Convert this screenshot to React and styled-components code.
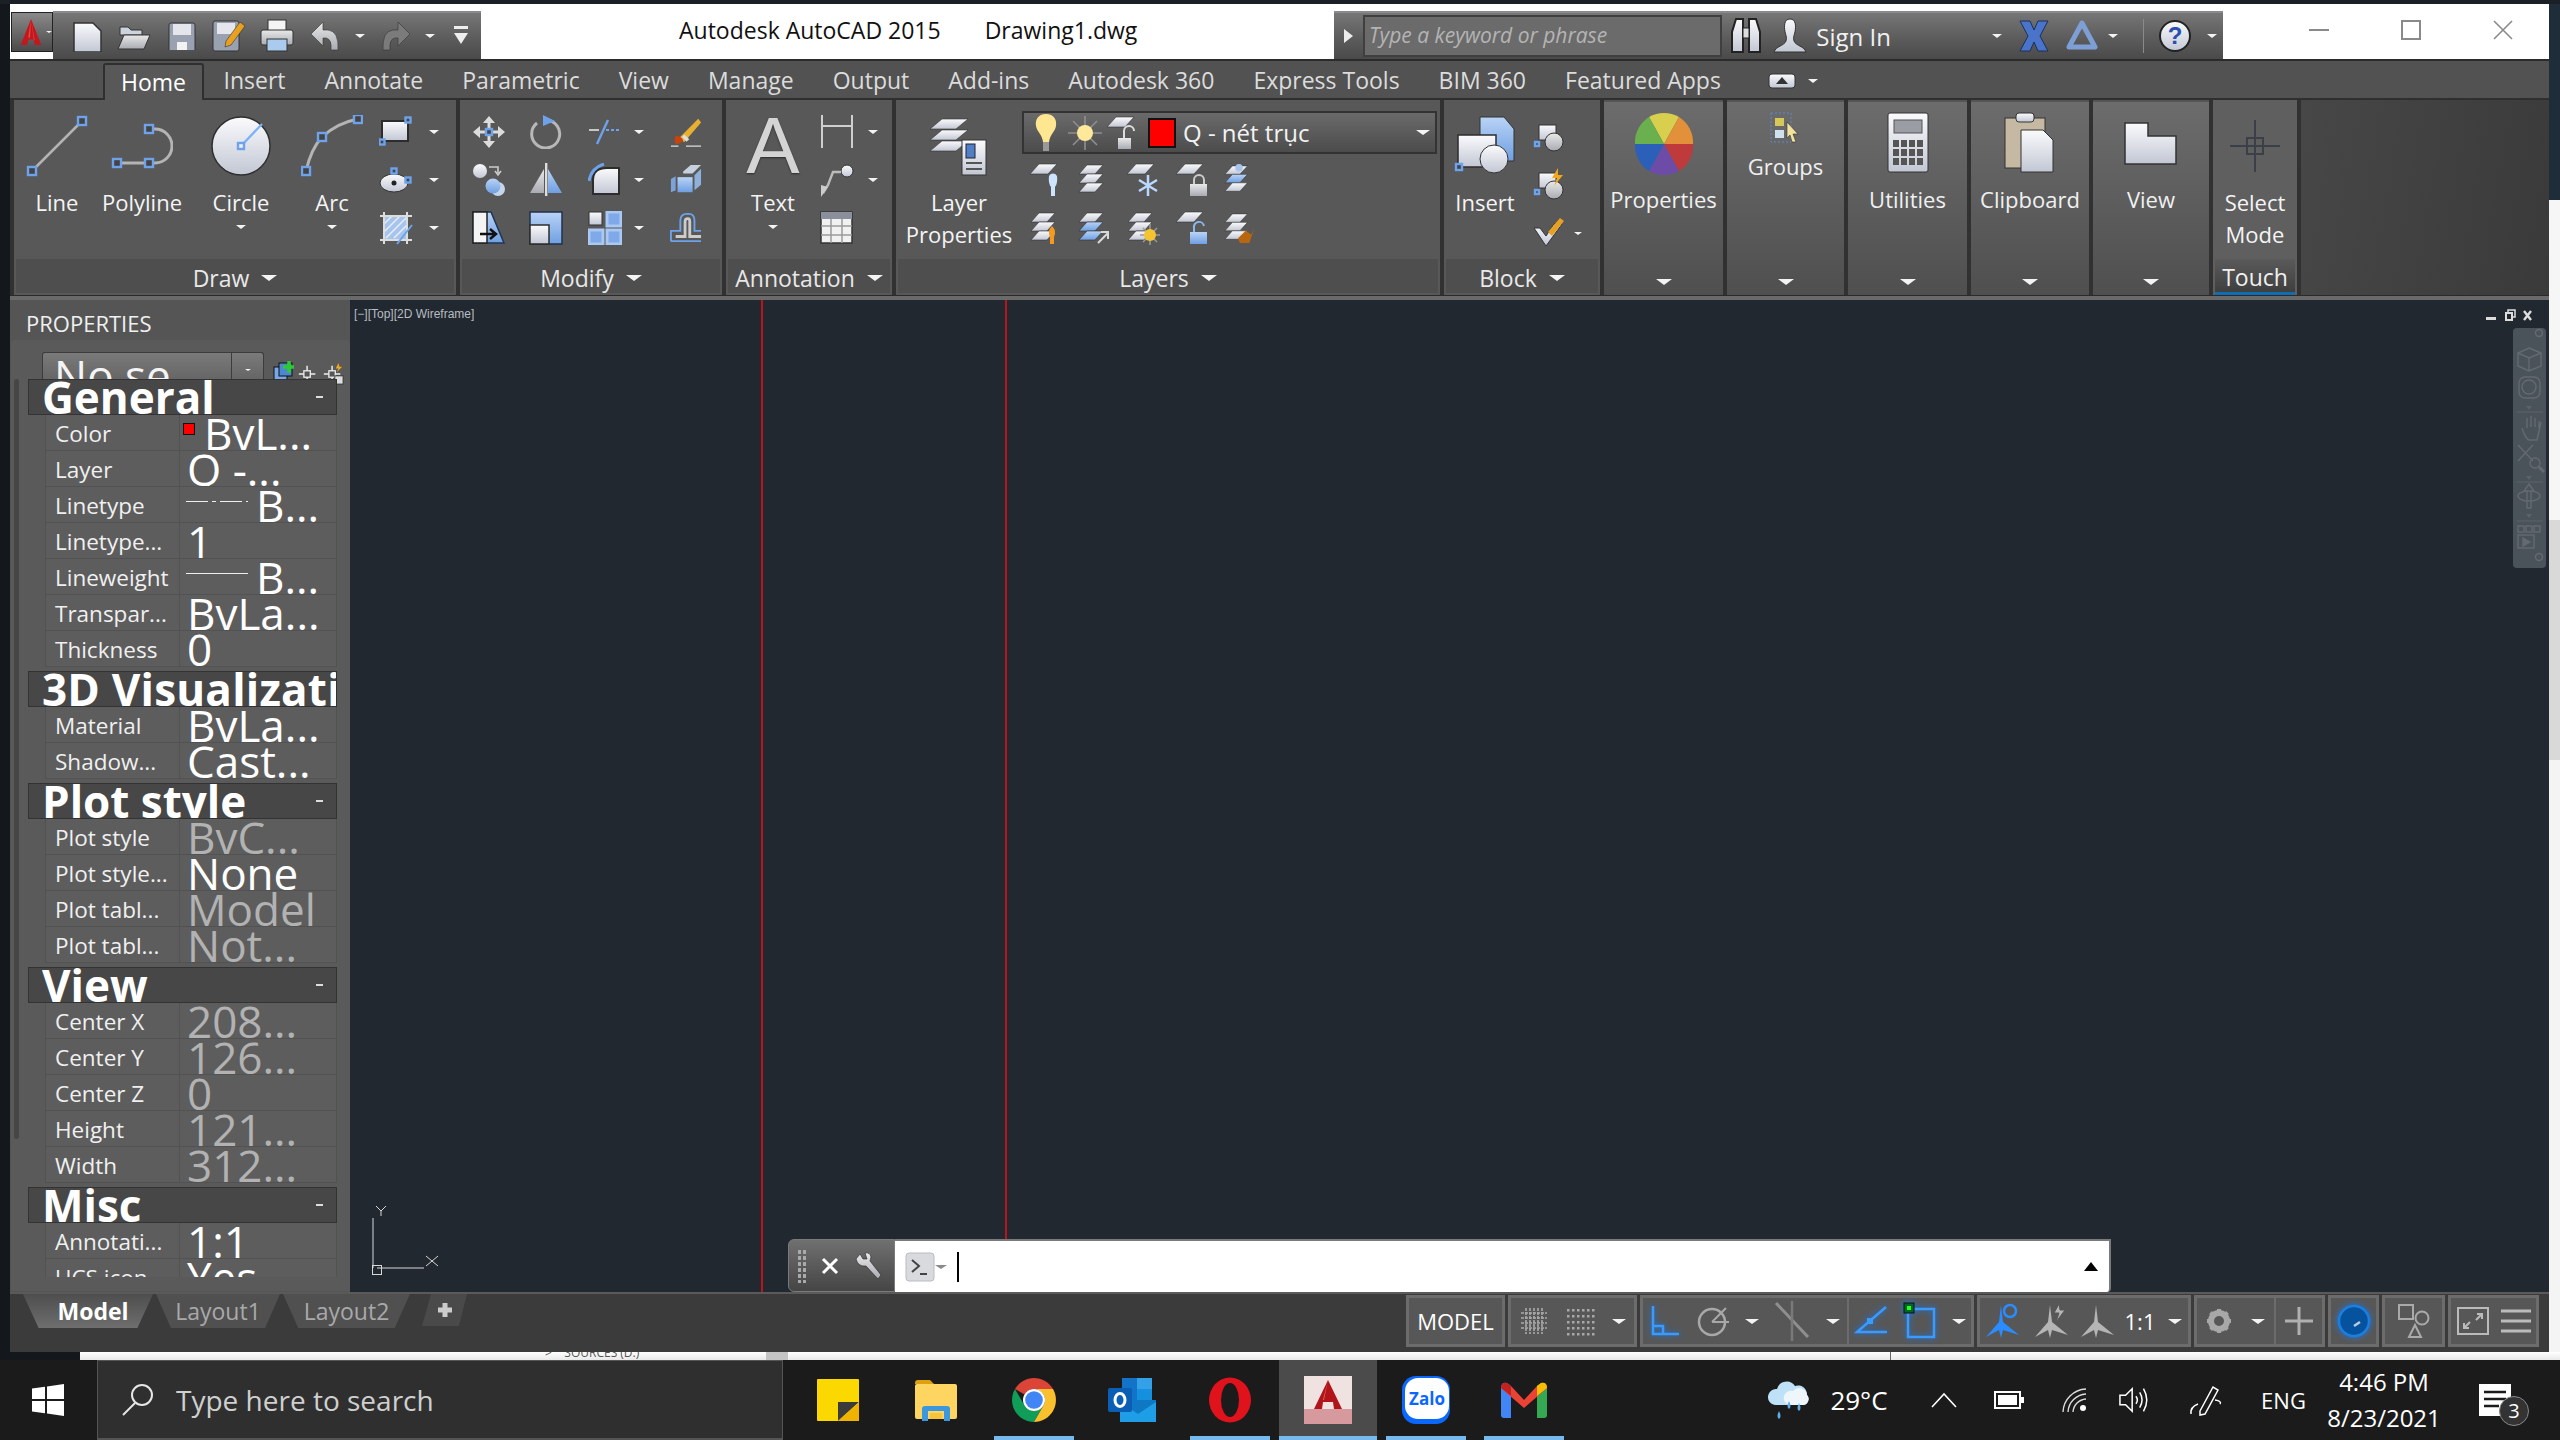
import React from 'react';
import styled, { createGlobalStyle } from 'styled-components';

const GlobalStyle = createGlobalStyle`
  html, body { margin: 0; padding: 0; background: #14181c; }
  * { box-sizing: border-box; }
  body { font-family: "Open Sans", "Noto Sans", "Liberation Sans", sans-serif; }
`;

//====== Page frame ======//
const Screen = styled.div`
  width: 2560px;
  height: 1440px;
  overflow: hidden;
  display: flex;
  flex-direction: column;
  background: #14181c;
`;
const TopStrip = styled.div`
  height: 4px;
  background: #1b2026;
`;
const Middle = styled.div`
  height: 1348px;
  display: flex;
  padding-left: 10px;
`;
const AppWindow = styled.div`
  width: 2539px;
  display: flex;
  flex-direction: column;
`;
const RightEdge = styled.div`
  flex: 1;
  display: flex;
  flex-direction: column;
`;
const EdgePart = styled.div`
  height: ${p => p.$h}px;
  background: ${p => p.$c};
`;
const DesktopStrip = styled.div`
  height: 8px;
  margin-left: 80px;
  background: linear-gradient(#ffffff, #e9e9e9);
  overflow: hidden;
  display: flex;
  align-items: flex-start;
`;
const StripText = styled.span`
  margin-left: 465px;
  margin-top: -6px;
  font-size: 12px;
  line-height: 14px;
  color: #555;
  width: 221px;
  flex: none;
`;
const StripBlock = styled.span`
  width: 22px;
  height: 8px;
  background: #c4c4c4;
  flex: none;
`;
const StripLine = styled.span`
  width: 1px;
  height: 8px;
  margin-left: 1102px;
  background: #666;
  flex: none;
`;

//====== Title bar ======//
const TitleBar = styled.header`
  height: 55px;
  display: flex;
  background: #fff;
`;
const AppButton = styled.div`
  width: 42px;
  height: 40px;
  margin-top: 8px;
  margin-left: 1px;
  background: linear-gradient(#8a8a8a, #4a4a4a);
  border: 1px solid #222;
  display: flex;
  align-items: center;
  padding-left: 5px;
  gap: 1px;
`;
const Qat = styled.div`
  width: 428px;
  margin-top: 7px;
  display: flex;
  align-items: center;
  padding-left: 10px;
  background: linear-gradient(#767676, #5c5c5c 55%, #4a4a4a);
  border-top: 2px solid #8a8a8a;
`;
const QatCell = styled.span`
  width: ${p => p.$w || 48}px;
  display: flex;
  justify-content: center;
  align-items: center;
`;
const TitleArea = styled.div`
  width: 853px;
  display: flex;
  align-items: center;
  padding-left: 198px;
  gap: 44px;
  padding-bottom: 4px;
  font-size: 23px;
  color: #111;
`;
const SearchBar = styled.div`
  width: 889px;
  margin-top: 7px;
  display: flex;
  align-items: center;
  background: linear-gradient(#767676, #5c5c5c 55%, #4a4a4a);
  border-top: 2px solid #8a8a8a;
  color: #fff;
`;
const SearchArrow = styled.i`
  width: 0;
  height: 0;
  margin-left: 10px;
  margin-right: 10px;
  border-top: 7px solid transparent;
  border-bottom: 7px solid transparent;
  border-left: 9px solid #eee;
`;
const SearchInput = styled.div`
  width: 359px;
  height: 42px;
  background: #6b6b6b;
  border: 2px solid #3f3f3f;
  padding-left: 4px;
  font-size: 21px;
  line-height: 36px;
  font-style: italic;
  color: #b4b4b4;
`;
const BarCell = styled.span`
  width: ${p => p.$w}px;
  display: flex;
  justify-content: ${p => p.$start ? 'flex-start' : 'center'};
  align-items: center;
  font-size: 24px;
  color: #f0f0f0;
`;
const BarSep = styled.span`
  width: 1px;
  height: 34px;
  background: #8a8a8a;
`;
const WinControls = styled.div`
  flex: 1;
  display: flex;
  padding-left: 50px;
  padding-top: 4px;
`;
const WinButton = styled.span`
  width: 92px;
  display: flex;
  align-items: center;
  justify-content: center;
  padding-bottom: 8px;
`;

//====== Ribbon tabs ======//
const TabRow = styled.nav`
  height: 41px;
  display: flex;
  align-items: flex-end;
  padding-left: 93px;
  background: #525252;
  border-top: 2px solid #2b2b2b;
  border-bottom: 2px solid #2f2f2f;
`;
const RibbonTab = styled.span`
  height: 35px;
  padding: 0 ${p => p.$pad || 19.5}px;
  line-height: 35px;
  font-size: 23px;
  white-space: nowrap;
  color: ${p => p.$active ? '#fff' : '#dcdcdc'};
  ${p => p.$active ? `
    background: #585858;
    border: 2px solid #2f2f2f;
    border-bottom: 0;
    border-radius: 3px 3px 0 0;
    margin-bottom: -2px;
    height: 37px;
  ` : ''}
`;
const TabExtras = styled.span`
  margin-left: 28px;
  height: 35px;
  display: flex;
  align-items: center;
  gap: 12px;
`;

//====== Ribbon panels ======//
const Ribbon = styled.div`
  height: 195px;
  display: flex;
  gap: 4px;
  padding-left: 4px;
  background: #313131;
`;
const RibbonRest = styled.div`
  flex: 1;
  background: linear-gradient(100deg, #474747, #3a3a3a);
`;
const RibbonFoot = styled.div`
  height: 5px;
  background: #6a6a6a;
  border-top: 1px solid #2a2a2a;
`;
const Panel = styled.section`
  width: ${p => p.$w}px;
  display: flex;
  flex-direction: column;
  background: #585858;
`;
const PanelBody = styled.div`
  height: 159px;
  display: flex;
`;
const PanelTitle = styled.div`
  height: 34px;
  margin: 0 2px;
  padding-top: 4px;
  background: #4e4e4e;
  display: flex;
  align-items: center;
  justify-content: center;
  gap: 12px;
  font-size: 23px;
  color: #e8e8e8;
`;
const FoldedPanel = styled.section`
  width: ${p => p.$w}px;
  display: flex;
  flex-direction: column;
  align-items: center;
  background: linear-gradient(#6c6c6c, #4f4f4f);
  color: #f0f0f0;
  font-size: 22px;
  border-top: 2px solid #555;
`;
const FoldedIcon = styled.div`
  height: ${p => p.$h || 79}px;
  padding-top: ${p => p.$top || 10}px;
  display: flex;
  justify-content: center;
`;
const FoldedLabel = styled.div`
  flex: 1;
  line-height: 32px;
  padding-top: 2px;
  display: flex;
  flex-direction: column;
  align-items: center;
  width: 100%;
`;
const FoldedArrow = styled.div`
  margin-top: auto;
  margin-bottom: 10px;
`;
const TouchPanel = styled.section`
  width: 84px;
  display: flex;
  flex-direction: column;
  align-items: center;
  background: #5f5f5f;
  color: #f0f0f0;
  font-size: 22px;
`;
const TouchTitle = styled.div`
  width: 80px;
  height: 36px;
  text-align: center;
  line-height: 36px;
  font-size: 23px;
  background: linear-gradient(#5a5a5a, #3f3f3f);
  border-bottom: 3px solid #0f6cb0;
`;
const BigTool = styled.div`
  width: ${p => p.$w}px;
  flex: ${p => p.$fill ? 1 : 'none'};
  display: flex;
  flex-direction: column;
  align-items: center;
  padding-top: 15px;
  color: #f4f4f4;
  font-size: 22px;
`;
const BigIcon = styled.div`
  height: 62px;
  margin-bottom: 9px;
  display: flex;
  align-items: center;
  justify-content: center;
`;
const LetterIcon = styled.span`
  font-family: "Liberation Sans", sans-serif;
  font-size: 80px;
  line-height: 62px;
  color: #d4d4d4;
  text-shadow: 0 1px 2px #2c2c2c;
`;
const ToolLabel = styled.div`
  line-height: 32px;
  text-align: center;
  white-space: nowrap;
`;
const ToolArrow = styled.div`
  margin-top: 5px;
  height: 8px;
  display: flex;
  align-items: center;
`;
const ToolColumn = styled.div`
  display: flex;
  flex-direction: column;
  padding-top: ${p => p.$top || 8}px;
  padding-left: ${p => p.$left || 0}px;
`;
const ToolRow = styled.div`
  height: 48px;
  display: flex;
  align-items: center;
  padding-left: ${p => p.$left || 0}px;
`;
const SmallTool = styled.span`
  width: ${p => p.$w || 32}px;
  flex: none;
  display: flex;
  align-items: center;
  gap: ${p => p.$gap || 12}px;
`;
const Arrow = styled.i`
  display: block;
  flex: none;
  width: 0;
  height: 0;
  border-left: ${p => p.$s || 5}px solid transparent;
  border-right: ${p => p.$s || 5}px solid transparent;
  border-top: ${p => Math.round((p.$s || 5) * 0.7)}px solid ${p => p.$c || '#f4f4f4'};
`;
const LayerCombo = styled.div`
  width: 415px;
  height: 43px;
  margin-top: 11px;
  display: flex;
  align-items: center;
  background: linear-gradient(#6a6a6a, #4c4c4c);
  border: 2px solid #333;
  color: #f2f2f2;
  font-size: 24px;
`;
const ComboCell = styled.span`
  width: ${p => p.$w}px;
  flex: none;
  display: flex;
  justify-content: center;
`;
const ColorChip = styled.span`
  width: 28px;
  height: 30px;
  margin-right: 7px;
  background: #ff0000;
  border: 2px solid #111;
  flex: none;
`;
const ComboArrow = styled.span`
  margin-left: auto;
  margin-right: 5px;
`;

//====== Workspace ======//
const Workspace = styled.main`
  height: 992px;
  display: flex;
`;
const Palette = styled.aside`
  width: 340px;
  background: #555;
  display: flex;
  flex-direction: column;
`;
const PaletteHead = styled.div`
  height: 40px;
  padding-left: 16px;
  line-height: 46px;
  font-size: 22px;
  color: #f0f0f0;
`;
const PaletteInner = styled.div`
  height: 951px;
  padding-top: 12px;
  background: #5a5a5a;
  border-radius: 4px 4px 0 0;
  margin-left: 1px;
  overflow: hidden;
`;
const PaletteTools = styled.div`
  height: 27px;
  display: flex;
  align-items: flex-start;
  padding-left: 31px;
  gap: 3px;
`;
const SelectBox = styled.div`
  width: 222px;
  height: 27px;
  margin-right: 5px;
  display: flex;
  overflow: hidden;
  background: linear-gradient(#7a7a7a, #666);
  border: 1px solid #3c3c3c;
  border-bottom: 0;
  border-radius: 3px 3px 0 0;
  color: #f4f4f4;
  font-size: 44px;
  line-height: 44px;
  padding-left: 11px;
`;
const SelectText = styled.span`
  flex: 1;
  white-space: nowrap;
`;
const SelectButton = styled.span`
  width: 32px;
  border-left: 1px solid #3c3c3c;
  display: flex;
  justify-content: center;
  padding-top: 16px;
`;
const PaletteTool = styled.span`
  width: 22px;
  display: flex;
  justify-content: center;
  padding-top: 9px;
`;
const PaletteBody = styled.div`
  display: flex;
  padding-left: 3px;
`;
const ScrollThumb = styled.div`
  width: 5px;
  height: 760px;
  margin-right: 9px;
  background: #464646;
  border-radius: 3px;
  flex: none;
`;
const PropList = styled.div`
  width: 309px;
  height: 898px;
  overflow: hidden;
`;
const PropGroup = styled.div`
  margin-bottom: 4px;
`;
const GroupHead = styled.div`
  height: 36px;
  display: flex;
  align-items: center;
  overflow: hidden;
  padding-left: 13px;
  padding-right: ${p => p.$open ? 5 : 0}px;
  background: #474747;
  border: 1px solid #333;
  color: #fff;
  font-size: 44px;
  font-weight: 700;
  line-height: 36px;
  white-space: nowrap;
`;
const GroupName = styled.span`
  flex: 1;
  min-width: 0;
  overflow: hidden;
  height: 36px;
  letter-spacing: ${p => p.$long ? '0.2px' : 0};
`;
const GroupDash = styled.span`
  width: 7px;
  height: 2px;
  margin-left: 4px;
  margin-right: 8px;
  background: #ddd;
  flex: none;
`;
const PropRow = styled.div`
  height: 36px;
  margin-left: 17px;
  display: grid;
  grid-template-columns: 133px 1fr;
  overflow: hidden;
  background: #5d5d5d;
  border-left: 1px solid #525252;
  border-right: 1px solid #525252;
  border-bottom: 1px solid #525252;
`;
const PropLabel = styled.div`
  padding-left: 9px;
  font-size: 22.5px;
  line-height: 37px;
  color: #f0f0f0;
  white-space: nowrap;
  overflow: hidden;
`;
const PropValue = styled.div`
  display: flex;
  align-items: center;
  overflow: hidden;
  padding-left: ${p => p.$left}px;
  border-left: 1px solid #525252;
  font-size: 44px;
  line-height: 36px;
  height: 35px;
  white-space: nowrap;
  color: ${p => p.$dim ? '#b2b2b2' : '#fff'};
`;
const Swatch = styled.span`
  width: 10px;
  height: 10px;
  margin-right: 10px;
  margin-top: -8px;
  background: #f00;
  outline: 1px solid #111;
  flex: none;
`;
const LineSample = styled.span`
  width: 62px;
  height: 1px;
  margin-right: 8px;
  margin-top: -6px;
  flex: none;
  background: ${p => p.$dash
    ? 'repeating-linear-gradient(90deg, #eee 0 22px, transparent 22px 26px, #eee 26px 30px, transparent 30px 34px)'
    : '#eee'};
`;

//====== Drawing canvas and what floats over it ======//
const Canvas = styled.section`
  flex: 1;
  position: relative;
  background: #212830;
  overflow: hidden;
`;
const RedLine = styled.i`
  position: absolute;
  top: 0;
  bottom: 0;
  left: ${p => p.$x}px;
  width: 2px;
  background: #b8161f;
`;
const ViewLabel = styled.span`
  position: absolute;
  left: 4px;
  top: 6px;
  font-family: "Liberation Sans", sans-serif;
  font-size: 12px;
  line-height: 16px;
  color: #b8bcc0;
`;
const ViewControls = styled.div`
  position: absolute;
  right: 17px;
  top: 7px;
`;
const NavBar = styled.div`
  position: absolute;
  right: 3px;
  top: 28px;
  width: 33px;
  height: 240px;
  border-radius: 4px;
  background: #4b535a;
`;
const UcsIcon = styled.div`
  position: absolute;
  left: 22px;
  top: 903px;
`;
const CommandLine = styled.div`
  position: absolute;
  left: 438px;
  top: 939px;
  width: 1323px;
  height: 53px;
  display: flex;
`;
const CommandHandle = styled.div`
  width: 107px;
  display: flex;
  align-items: center;
  padding-left: 8px;
  gap: 14px;
  background: linear-gradient(#707070, #454545);
  border-radius: 6px 0 0 6px;
  border: 1px solid #7a7a7a;
`;
const GripDots = styled.span`
  width: 10px;
  height: 34px;
  background-image: radial-gradient(#aaa 45%, transparent 50%);
  background-size: 5px 6px;
`;
const CommandInput = styled.div`
  flex: 1;
  display: flex;
  align-items: center;
  padding-left: 10px;
  background: #fff;
  border-top: 2px solid #7a7a7a;
  border-right: 2px solid #7a7a7a;
  border-radius: 0 0 4px 0;
`;
const Caret = styled.i`
  width: 2px;
  height: 30px;
  margin-left: 10px;
  background: #000;
`;
const CommandEnd = styled.span`
  margin-left: auto;
  margin-right: 11px;
`;
const ArrowUp = styled.i`
  display: block;
  width: 0;
  height: 0;
  border-left: 7px solid transparent;
  border-right: 7px solid transparent;
  border-bottom: 9px solid #000;
`;

//====== Status bar ======//
const StatusBar = styled.footer`
  height: 60px;
  display: flex;
  align-items: flex-start;
  background: #3b3b3b;
  border-top: 2px solid #5a5a5a;
  padding-right: 10px;
`;
const LayoutTabs = styled.div`
  margin-left: 13px;
  margin-top: 0;
  display: flex;
  gap: 3px;
`;
const LayoutTab = styled.span`
  width: ${p => p.$w}px;
  height: 34px;
  padding-left: ${p => p.$active ? 10 : 0}px;
  text-align: center;
  line-height: 34px;
  font-size: 23px;
  font-weight: ${p => p.$active ? 700 : 400};
  color: ${p => p.$active ? '#fff' : '#a9a9a9'};
  background: ${p => p.$active ? 'linear-gradient(#4e4e4e, #6e6e6e)' : '#505050'};
  clip-path: polygon(0 0, 100% 0, 88% 100%, 12% 100%);
`;
const AddTab = styled.span`
  width: 45px;
  height: 32px;
  margin-left: 9px;
  display: flex;
  align-items: center;
  justify-content: center;
  background: #4a4a4a;
  clip-path: polygon(20% 0, 100% 0, 82% 100%, 0 100%);
`;
const StatusGroups = styled.div`
  margin-left: auto;
  margin-top: 1px;
  display: flex;
  gap: 3px;
`;
const StatusGroup = styled.div`
  width: ${p => p.$w}px;
  height: 52px;
  display: flex;
  align-items: center;
  background: #575757;
  border: 3px solid #6c6c6c;
  color: #fff;
  font-size: 22px;
`;
const StatusCell = styled.span`
  width: ${p => p.$w}px;
  height: 100%;
  flex: none;
  display: flex;
  align-items: center;
  justify-content: center;
  ${p => p.$rule ? 'border-left: 2px solid #6c6c6c;' : ''}
`;

//====== Taskbar ======//
const Taskbar = styled.div`
  height: 80px;
  display: flex;
  background: #1b1b1b;
  color: #fff;
`;
const StartButton = styled.div`
  width: 97px;
  display: flex;
  align-items: center;
  justify-content: center;
  padding-right: 2px;
`;
const SearchBox = styled.div`
  width: 686px;
  display: flex;
  align-items: center;
  gap: 21px;
  padding-left: 23px;
  background: #2f2f2f;
  border: 1px solid #555;
  border-bottom: 2px solid #555;
  color: #cfcfcf;
  font-size: 28px;
`;
const AppIcons = styled.div`
  display: flex;
  margin-left: 6px;
`;
const AppSlot = styled.div`
  width: 98px;
  position: relative;
  display: flex;
  align-items: center;
  justify-content: center;
  background: ${p => p.$active ? '#4b4b4b' : 'transparent'};
  ${p => p.$running ? `
    &::after {
      content: '';
      position: absolute;
      left: ${p.$active ? 0 : 9}px;
      right: ${p.$active ? 0 : 9}px;
      bottom: 0;
      height: 4px;
      background: #76b9ed;
    }
  ` : ''}
`;
const Tray = styled.div`
  margin-left: auto;
  padding-right: 32px;
  display: flex;
  align-items: center;
`;
const TrayItem = styled.span`
  width: ${p => p.$w}px;
  display: flex;
  justify-content: center;
  align-items: center;
  font-size: ${p => p.$size || 24}px;
  white-space: nowrap;
`;
const Clock = styled.span`
  width: 156px;
  text-align: center;
  font-size: 24px;
  line-height: 36px;
`;
const NoteWrap = styled.span`
  width: 66px;
  display: flex;
  justify-content: center;
  position: relative;
`;
const NoteBadge = styled.span`
  position: absolute;
  left: 37px;
  top: 12px;
  width: 30px;
  height: 30px;
  border-radius: 50%;
  background: #333;
  border: 1px solid #888;
  font-size: 20px;
  line-height: 28px;
  text-align: center;
  color: #fff;
`;

const HiddenDefs = styled.svg`
  display: block;
  width: 0;
  height: 0;
`;
const Glow = styled.svg`
  filter: drop-shadow(0 0 3px #1877e6);
`;

//====== Icons ======//
const Defs = () => (
  <HiddenDefs>
    <defs>
      <linearGradient id="lite" x1="0" y1="0" x2="0" y2="1">
        <stop offset="0" stopColor="#fbfbfd" />
        <stop offset="1" stopColor="#c2c7d4" />
      </linearGradient>
      <linearGradient id="blue" x1="0" y1="0" x2="0" y2="1">
        <stop offset="0" stopColor="#b9d3f6" />
        <stop offset="1" stopColor="#6f9fe2" />
      </linearGradient>
      <linearGradient id="metal" x1="0" y1="0" x2="0" y2="1">
        <stop offset="0" stopColor="#e9e9e9" />
        <stop offset="1" stopColor="#a9abb2" />
      </linearGradient>
    </defs>
  </HiddenDefs>
);

const Ico = ({ w = 34, h = w, vb, children }) => (
  <svg width={w} height={h} viewBox={vb || `0 0 ${w} ${h}`}>{children}</svg>
);
const Grip = ({ x, y, s = 8, fill = '#444' }) => (
  <rect x={x - s / 2} y={y - s / 2} width={s} height={s} fill={fill} stroke="#6ea2ea" strokeWidth="2.4" />
);

const LineIcon = () => (
  <Ico w={62}>
    <path d="M6 56L56 6" stroke="#b4b4b4" strokeWidth="2.5" />
    <Grip x={6} y={56} /><Grip x={56} y={6} />
  </Ico>
);
const PolylineIcon = () => (
  <Ico w={62}>
    <path d="M6 48H44A17 17 0 0 0 44 14H38" fill="none" stroke="#b4b4b4" strokeWidth="3" />
    <Grip x={6} y={48} /><Grip x={38} y={48} /><Grip x={38} y={14} />
  </Ico>
);
const CircleIcon = () => (
  <Ico w={62}>
    <circle cx="31" cy="31" r="29" fill="url(#lite)" stroke="#2f2f2f" strokeWidth="1.5" />
    <path d="M31 31L52 9" stroke="#7fb2f7" strokeWidth="2.4" />
    <Grip x={31} y={31} s={6} fill="#eef" />
  </Ico>
);
const ArcIcon = () => (
  <Ico w={62}>
    <path d="M5 56Q10 34 21 22Q36 8 57 4" fill="none" stroke="#b4b4b4" strokeWidth="3" />
    <Grip x={5} y={56} /><Grip x={21} y={22} /><Grip x={57} y={4} />
  </Ico>
);
const RectIcon = () => (
  <Ico>
    <rect x="3" y="6" width="26" height="20" fill="url(#lite)" stroke="#2c2c2c" strokeWidth="2" />
    <Grip x={29} y={5} s={5} /><Grip x={3} y={27} s={5} />
  </Ico>
);
const EllipseIcon = () => (
  <Ico>
    <ellipse cx="15" cy="20" rx="14" ry="9" fill="url(#lite)" stroke="#333" />
    <circle cx="15" cy="20" r="2.5" fill="#222" />
    <Grip x={15} y={8} s={5} /><Grip x={29} y={17} s={5} />
  </Ico>
);
const HatchIcon = () => (
  <Ico>
    <rect x="5" y="5" width="23" height="24" fill="#a7c4ec" stroke="#ddd" strokeWidth="2" />
    <path d="M5 13L13 5M5 21L21 5M7 27L28 6M15 27L28 14" stroke="#e6eefa" strokeWidth="1.5" />
    <path d="M1 5H33M1 29H33M5 1V33M28 1V33" stroke="#ddd" strokeWidth="2" />
    <path d="M18 33L33 14" stroke="#6ea2ea" strokeWidth="2" />
  </Ico>
);
const MoveIcon = () => (
  <Ico>
    <path d="M17 1L23 8H11ZM17 33L11 26H23ZM1 17L8 11V23ZM33 17L26 23V11Z" fill="#dcdcdc" />
    <path d="M17 8V26M8 17H26" stroke="#dcdcdc" strokeWidth="3" />
    <Grip x={17} y={17} s={6} />
  </Ico>
);
const RotateIcon = () => (
  <Ico>
    <path d="M17 5A14 14 0 1 1 8 8" fill="none" stroke="#b8b8b8" strokeWidth="3" />
    <path d="M14 0L26 6L14 11Z" fill="#6ea2ea" />
  </Ico>
);
const TrimIcon = () => (
  <Ico>
    <path d="M1 15H11" stroke="#c8c8c8" strokeWidth="2" />
    <path d="M20 5L9 29" stroke="#6ea2ea" strokeWidth="2.4" />
    <path d="M18 15H33" stroke="#6ea2ea" strokeWidth="2" strokeDasharray="3 2" />
  </Ico>
);
const EraseIcon = () => (
  <Ico>
    <path d="M10 23L30 3L33 7L15 28Z" fill="#e8b030" />
    <path d="M14 21L19 26" stroke="#ddd" strokeWidth="4" />
    <path d="M6 21Q12 21 14 26Q10 30 6 30Q4 26 6 21Z" fill="#c9440c" />
    <path d="M1 32H9M17 32H33" stroke="#ddd" strokeWidth="1.5" />
  </Ico>
);
const CopyIcon = () => (
  <Ico>
    <circle cx="8" cy="8" r="7" fill="url(#lite)" />
    <path d="M17 4H26V10M23 8L26 12L29 8" fill="none" stroke="#ccc" strokeWidth="1.6" />
    <circle cx="26" cy="26" r="7" fill="#c7d5ea" />
    <circle cx="21" cy="23" r="7.5" fill="url(#blue)" />
  </Ico>
);
const MirrorIcon = () => (
  <Ico>
    <path d="M15 6V30H1Z" fill="url(#metal)" />
    <path d="M19 6V30H33Z" fill="url(#blue)" />
    <rect x="16" y="0" width="2.4" height="33" fill="#ddd" />
  </Ico>
);
const FilletIcon = () => (
  <Ico>
    <path d="M5 31V17Q5 5 19 5H31V31Z" fill="url(#lite)" stroke="#2d2d2d" strokeWidth="2" />
    <path d="M1 18Q3 5 16 1" fill="none" stroke="#6ea2ea" strokeWidth="3" />
  </Ico>
);
const ExplodeIcon = () => (
  <Ico>
    <path d="M8 14H24V30H8Z" fill="url(#blue)" />
    <path d="M14 8L22 1H33L24 10H14Z" fill="#c5d1df" />
    <path d="M26 12L33 5V22L26 28Z" fill="#8fb0da" />
    <path d="M1 16L6 13V28L1 30Z" fill="#7da4da" />
  </Ico>
);
const StretchIcon = () => (
  <Ico>
    <path d="M1 1H19L32 32H1Z" fill="url(#blue)" stroke="#1d3557" strokeWidth="1.5" />
    <path d="M1 1H15V32H1Z" fill="#f4f4f4" stroke="#222" strokeWidth="1.5" />
    <path d="M8 23H22M18 18L24 23L18 28" fill="none" stroke="#111" strokeWidth="2.5" />
  </Ico>
);
const ScaleIcon = () => (
  <Ico>
    <rect x="1" y="1" width="32" height="32" fill="url(#blue)" stroke="#22314a" strokeWidth="1.5" />
    <rect x="1" y="14" width="19" height="19" fill="url(#lite)" stroke="#2c2c2c" strokeWidth="1.5" />
  </Ico>
);
const ArrayIcon = () => (
  <Ico>
    <rect x="1" y="1" width="13" height="13" fill="url(#lite)" stroke="#333" />
    <rect x="19" y="1" width="14" height="14" fill="#7fa9e8" stroke="#a9c8f2" strokeWidth="3" />
    <rect x="1" y="19" width="14" height="14" fill="#7fa9e8" stroke="#a9c8f2" strokeWidth="3" />
    <rect x="19" y="19" width="14" height="14" fill="#7fa9e8" stroke="#a9c8f2" strokeWidth="3" />
  </Ico>
);
const OffsetIcon = () => (
  <Ico>
    <path d="M1 31V20H11V9Q11 2 18 2H20Q26 2 26 9V20H33M33 31H1" fill="none" stroke="#6ea2ea" strokeWidth="2" />
    <path d="M6 26H16V10Q16 7 19 7Q21 7 21 10V26H33" fill="none" stroke="#ccc" strokeWidth="3" />
  </Ico>
);
const DimIcon = () => (
  <Ico>
    <path d="M2 0V33M32 0V33" stroke="#cfcfcf" strokeWidth="2" />
    <path d="M2 11H32" stroke="#cfcfcf" strokeWidth="2" />
  </Ico>
);
const LeaderIcon = () => (
  <Ico>
    <circle cx="27" cy="8" r="6" fill="url(#lite)" stroke="#333" />
    <path d="M21 9H13L8 22L3 30" fill="none" stroke="#bbb" strokeWidth="2.4" />
    <path d="M1 22L8 24L1 34Z" fill="#ccc" />
  </Ico>
);
const TableIcon = () => (
  <Ico>
    <rect x="1" y="1" width="31" height="31" fill="#f1f1f1" stroke="#333" strokeWidth="1.5" />
    <rect x="1" y="1" width="31" height="7" fill="#8a8f9b" />
    <path d="M1 15H32M1 24H32M11 8V32M22 8V32" stroke="#9a9a9a" strokeWidth="1.5" />
  </Ico>
);
const Sheet = ({ y, fill = 'url(#lite)' }) => (
  <path d={`M10 ${y}H26L18 ${y + 9}H2Z`} fill={fill} stroke="#333" strokeWidth=".6" />
);
const LayerPropsIcon = () => (
  <Ico w={62}>
    <path d="M14 4H40L28 14H2Z" fill="url(#lite)" stroke="#333" strokeWidth=".6" />
    <path d="M14 15H40L28 25H2Z" fill="url(#lite)" stroke="#333" strokeWidth=".6" />
    <path d="M14 26H40L28 36H2Z" fill="url(#lite)" stroke="#333" strokeWidth=".6" />
    <rect x="34" y="25" width="24" height="35" fill="url(#lite)" stroke="#333" />
    <rect x="38" y="29" width="9" height="14" fill="#4f7fc5" stroke="#223" />
    <path d="M38 48H54M38 54H54" stroke="#555" strokeWidth="2" />
  </Ico>
);
const Bulb = ({ c = '#ffe690' }) => (
  <Ico w={24} h={38}>
    <path d="M12 0C4 0 1 6 2 12C3 18 8 20 9 28H15C16 20 21 18 22 12C23 6 20 0 12 0Z" fill={c} />
    <rect x="9" y="28" width="6" height="9" fill="#999" />
  </Ico>
);
const Sun = ({ r = 8 }) => (
  <Ico>
    <path d="M17 0V34M0 17H34M5 5L29 29M29 5L5 29" stroke="#8f8f8f" strokeWidth="1.6" />
    <circle cx="17" cy="17" r={r} fill="#ffe89a" />
  </Ico>
);
const Layer = () => <path d="M10 1H28L19 11H1Z" fill="url(#lite)" stroke="#333" strokeWidth=".6" />;
const LockOpen = () => (
  <Ico>
    <Layer />
    <path d="M18 22V15A5 5 0 0 1 28 15" fill="none" stroke="#ddd" strokeWidth="2" />
    <rect x="12" y="22" width="13" height="11" fill="url(#metal)" />
  </Ico>
);
const LayerSmall = ({ kind }) => (
  <Ico>
    {kind === 'stack' || kind === 'stackBlue' || kind === 'stackUser' ? (
      <>
        <Sheet y={2} /><Sheet y={11} fill={kind === 'stack' ? 'url(#lite)' : 'url(#blue)'} /><Sheet y={20} fill={kind === 'stackUser' ? 'url(#lite)' : kind === 'stack' ? 'url(#lite)' : 'url(#blue)'} />
      </>
    ) : <Layer />}
    {kind === 'bulb' && <path d="M20 13A5 6 0 0 1 28 13Q29 20 26 24H22Q19 20 20 13ZM22 24H26V33H22Z" fill="#cde4ff" />}
    {kind === 'snow' && <g stroke="#bcd7ff" strokeWidth="2.5"><path d="M22 12V33M13 17L31 28M31 17L13 28" /></g>}
    {kind === 'lock' && <><path d="M19 21V17A5 5 0 0 1 29 17V21" fill="none" stroke="#ccc" strokeWidth="2" /><rect x="15" y="21" width="17" height="12" fill="url(#metal)" /></>}
    {kind === 'lockBlue' && <><path d="M19 21V17A5 5 0 0 1 29 15" fill="none" stroke="#8cb6ec" strokeWidth="2" /><rect x="15" y="21" width="17" height="12" fill="url(#blue)" /></>}
    {kind === 'stackUser' && <circle cx="17" cy="4" r="4" fill="#a9c4ea" />}
  </Ico>
);
const LayerExtra = ({ kind }) => (
  <Ico>
    <Sheet y={2} /><Sheet y={11} fill={kind === 'arrow' ? 'url(#blue)' : 'url(#lite)'} /><Sheet y={20} fill={kind === 'arrow' ? 'url(#blue)' : 'url(#lite)'} />
    {kind === 'bulb' && <path d="M23 15Q18 20 21 26V33H25V26Q28 20 23 15Z" fill="#f59a1e" />}
    {kind === 'arrow' && <path d="M21 32L31 22M24 21H31V28" fill="none" stroke="#d8d8d8" strokeWidth="2" />}
    {kind === 'sun' && <g><path d="M24 13V34M14 24H34M17 17L31 31M31 17L17 31" stroke="#999" strokeWidth="1.5" /><circle cx="24" cy="24" r="6" fill="#f4c430" /></g>}
    {kind === 'brush' && <path d="M16 28L24 20L30 24L33 18L28 33L18 33Z" fill="#b8660f" />}
  </Ico>
);
const InsertIcon = () => (
  <Ico w={62}>
    <path d="M26 2H50L60 14V46H26Z" fill="url(#blue)" stroke="#333" />
    <rect x="4" y="20" width="38" height="32" fill="url(#lite)" stroke="#2c2c2c" strokeWidth="1.5" />
    <circle cx="40" cy="44" r="14" fill="url(#lite)" stroke="#333" />
    <Grip x={5} y={52} s={6} />
  </Ico>
);
const BlockSmall = ({ kind }) => (
  <Ico>
    {kind === 'edit' ? (
      <>
        <path d="M2 12L14 30L30 8L22 8L14 20L8 12Z" fill="url(#lite)" stroke="#333" />
        <path d="M16 16L28 2L32 5L20 20Z" fill="#e8a020" />
      </>
    ) : (
      <>
        <rect x="7" y="5" width="17" height="15" fill="url(#lite)" stroke="#333" />
        <circle cx="22" cy="22" r="9" fill="url(#metal)" stroke="#333" />
        <Grip x={5} y={24} s={4} />
        {kind === 'bolt' && <path d="M26 0L20 10H25L22 18L31 7H26Z" fill="#f2a81d" />}
      </>
    )}
  </Ico>
);
const ColorWheel = () => (
  <Ico w={62} h={64} vb="0 0 62 64">
    <g stroke="none">
      <path d="M31 32L16 5A30 30 0 0 1 46 5Z" fill="#d9cf4f" />
      <path d="M31 32L46 5A30 30 0 0 1 60 32Z" fill="#e2903a" />
      <path d="M31 32H60A30 30 0 0 1 46 59Z" fill="#bf3a3a" />
      <path d="M31 32L46 59A30 30 0 0 1 16 59Z" fill="#6d4ca8" />
      <path d="M31 32L16 59A30 30 0 0 1 2 32Z" fill="#2c5fb8" />
      <path d="M31 32H2A30 30 0 0 1 16 5Z" fill="#6bb04f" />
    </g>
  </Ico>
);
const GroupsIcon = () => (
  <Ico w={32} h={32}>
    <rect x="1" y="1" width="20" height="29" fill="none" stroke="#5f88cf" strokeDasharray="2 2" />
    <rect x="5" y="6" width="9" height="8" fill="#d6c75a" />
    <rect x="5" y="18" width="9" height="8" fill="#cfe0ee" />
    <path d="M17 10L28 22L23 22L26 30L22 30L20 23L17 26Z" fill="#f1e39c" stroke="#333" strokeWidth=".6" />
  </Ico>
);
const CalcIcon = () => (
  <Ico w={42} h={62}>
    <rect x="1" y="1" width="40" height="59" rx="2" fill="url(#lite)" stroke="#333" />
    <rect x="7" y="8" width="28" height="13" fill="#9a9da4" stroke="#555" />
    {[0, 1, 2].map(r => [0, 1, 2, 3].map(c => (
      <rect key={`${r}${c}`} x={6 + c * 8} y={28 + r * 9} width="6" height="7" fill="#555" />
    )))}
  </Ico>
);
const ClipboardIcon = () => (
  <Ico w={54} h={62}>
    <rect x="2" y="6" width="40" height="50" fill="#c6b9a3" stroke="#333" />
    <rect x="13" y="1" width="18" height="9" rx="3" fill="url(#lite)" stroke="#333" />
    <path d="M18 18H40L50 28V60H18Z" fill="url(#lite)" stroke="#333" />
  </Ico>
);
const ViewIcon = () => (
  <Ico w={54} h={44}>
    <path d="M1 1H24V14H52V42H1Z" fill="url(#lite)" stroke="#333" strokeWidth="1.5" />
  </Ico>
);
const CrossIcon = () => (
  <Ico w={50} h={52}>
    <path d="M25 0V52M0 26H50" stroke="#3b4048" strokeWidth="2" />
    <rect x="17" y="18" width="16" height="16" fill="none" stroke="#3b4048" strokeWidth="2" />
  </Ico>
);

const AutocadLogo = ({ size = 30 }) => (
  <Ico w={size} h={size} vb="0 0 30 30">
    <path d="M15 1L24 24L26 29H19L18 23H12L11 29H4L6 24Z" fill="#c4161c" />
    <path d="M15 1L14 21H12L15 1ZM15 1L19 24L18 23Z" fill="#e14a4a" />
  </Ico>
);
const Doc = () => (
  <Ico w={32}>
    <path d="M3 3H22L30 11V32H3Z" fill="url(#lite)" stroke="#333" strokeWidth="1.5" />
  </Ico>
);
const Open = () => (
  <Ico>
    <path d="M3 8H11L14 11H25V16H3Z" fill="#cdd3dc" stroke="#333" />
    <path d="M1 30L7 16H33L27 30Z" fill="url(#metal)" stroke="#333" />
  </Ico>
);
const Save = () => (
  <Ico w={28}>
    <rect x="1" y="1" width="26" height="30" rx="2" fill="#9aa2b2" stroke="#333" />
    <rect x="5" y="2" width="18" height="11" fill="#e4e6ec" />
    <rect x="9" y="20" width="10" height="11" fill="#f2f2f2" />
  </Ico>
);
const SaveAs = () => (
  <Ico w={34}>
    <rect x="1" y="2" width="26" height="30" rx="2" fill="#9aa2b2" stroke="#333" />
    <rect x="5" y="4" width="18" height="11" fill="#e4e6ec" />
    <path d="M14 22L28 3L33 7L19 26L13 28Z" fill="#e8a020" stroke="#333" strokeWidth=".6" />
  </Ico>
);
const Printer = () => (
  <Ico>
    <rect x="8" y="1" width="18" height="11" fill="#f4f4f4" stroke="#333" />
    <rect x="1" y="11" width="32" height="15" rx="2" fill="url(#metal)" stroke="#333" />
    <rect x="7" y="20" width="20" height="12" fill="#aacbee" stroke="#333" />
  </Ico>
);
const Undo = ({ flip, c = 'url(#metal)' }) => (
  <svg width="30" height="32" viewBox="0 0 30 32">
    <path
      transform={flip ? 'matrix(-1 0 0 1 30 0)' : undefined}
      d="M13 2V10H18Q29 11 28 30H21Q22 19 16 18H13V26L1 14Z"
      fill={c}
      stroke="#333"
      strokeWidth=".6"
    />
  </svg>
);
const Customize = () => (
  <Ico w={18} h={22}>
    <rect x="2" y="1" width="14" height="3" fill="#eee" />
    <path d="M2 8H16L9 19Z" fill="#eee" />
  </Ico>
);
const Binoculars = () => (
  <Ico w={32} h={36}>
    <path d="M6 1H13V34H2V14ZM19 1H26L30 14V34H19Z" fill="url(#lite)" stroke="#222" strokeWidth="2" />
    <rect x="13" y="10" width="6" height="10" fill="#ddd" stroke="#222" />
  </Ico>
);
const UserIcon = () => (
  <Ico w={34} h={36}>
    <path d="M17 1C11 1 11 8 12 14C13 18 14 19 13 23C11 28 3 28 1 34H33C31 28 23 28 21 23C20 19 21 18 22 14C23 8 23 1 17 1Z" fill="url(#lite)" stroke="#333" />
  </Ico>
);
const ExchangeIcon = () => (
  <Ico w={30} h={32}>
    <path d="M1 1H11L15 10L19 1H29L21 16L29 31H19L15 22L11 31H1L9 16Z" fill="#4a74c9" stroke="#1c2f5c" />
  </Ico>
);
const A360Icon = () => (
  <Ico w={34} h={34}>
    <path d="M17 4L30 28H4Z" fill="none" stroke="#7e9fd6" strokeWidth="5" strokeLinejoin="round" />
  </Ico>
);
const HelpIcon = () => (
  <svg width="34" height="34" viewBox="0 0 34 34">
    <circle cx="17" cy="17" r="15" fill="url(#lite)" stroke="#222" strokeWidth="2" />
    <text x="17" y="25" textAnchor="middle" fontFamily="Liberation Sans" fontWeight="700" fontSize="24" fill="#2a4fb0">?</text>
  </svg>
);
const WinMin = () => <Ico w={20} h={2}><rect width="20" height="2" fill="#8a8a8a" /></Ico>;
const WinMax = () => <Ico w={20} h={20}><rect x="1" y="1" width="18" height="18" fill="none" stroke="#8a8a8a" strokeWidth="2" /></Ico>;
const WinClose = () => <Ico w={20} h={20}><path d="M1 1L19 19M19 1L1 19" stroke="#8a8a8a" strokeWidth="1.6" /></Ico>;
const WorkspaceToggle = () => (
  <Ico w={28} h={16}>
    <rect x="1" y="1" width="26" height="14" rx="3" fill="url(#lite)" stroke="#333" />
    <path d="M14 4L20 11H8Z" fill="#333" />
  </Ico>
);

const PlusBox = () => (
  <Ico w={22} h={22}>
    <rect x="2" y="6" width="13" height="14" fill="#7aa7e6" stroke="#111" />
    <rect x="7" y="2" width="13" height="13" fill="#4c86d4" stroke="#111" />
    <path d="M17 0V12M11 6H23" stroke="#2ecb2e" strokeWidth="3.5" />
  </Ico>
);
const PickPoint = ({ extra }) => (
  <Ico w={24} h={26}>
    <path d="M11 4V22M2 13H20" stroke="#eee" strokeWidth="1.6" />
    <rect x="7.5" y="9.5" width="7" height="7" fill="#555" stroke="#eee" strokeWidth="1.4" />
    {extra && <path d="M18 1L15 7H18L16 11L22 5H19Z" fill="#f2a81d" />}
    {extra && <rect x="14" y="15" width="9" height="9" fill="#ddd" stroke="#333" />}
  </Ico>
);

const ViewportControls = () => (
  <Ico w={48} h={16}>
    <rect x="2" y="9" width="10" height="3" fill="#ddd" />
    <rect x="22" y="5" width="6" height="7" fill="none" stroke="#ddd" strokeWidth="2" />
    <path d="M24 4V2H31V9H29" fill="none" stroke="#ddd" strokeWidth="1.5" />
    <path d="M40 3L47 12M47 3L40 12" stroke="#ddd" strokeWidth="2.4" />
  </Ico>
);
const NavBarArt = () => (
  <Ico w={33} h={240}>
    <g fill="none" stroke="#636a70" strokeWidth="1.4">
      <circle cx="26" cy="5" r="3.5" />
      <path d="M16 20L28 25V38L16 43L5 38V25ZM5 25L16 30L28 25M16 30V43" />
      <rect x="6" y="49" width="21" height="21" rx="6" />
      <circle cx="16" cy="59" r="7" />
      <path d="M4 84H30M4 154H30M4 193H30" strokeOpacity=".5" />
      <path d="M9 100Q12 110 16 112H24L28 94M14 100V90M18 99V88M22 99V90M26 100V93" />
      <path d="M5 117L20 133M20 117L5 133" />
      <circle cx="22" cy="135" r="5" />
      <path d="M26 139L31 144" strokeWidth="3" />
      <path d="M16 156L21 163H18V180H14V163H11Z" />
      <ellipse cx="16" cy="168" rx="11" ry="5" />
      <rect x="5" y="198" width="6" height="6" /><rect x="13" y="198" width="6" height="6" /><rect x="21" y="198" width="6" height="6" />
      <rect x="5" y="207" width="16" height="13" />
      <path d="M10 210L17 214L10 218Z" fill="#636a70" />
      <circle cx="26" cy="229" r="3.5" />
    </g>
    <g fill="#5c6268">
      <path d="M13 78H19L16 82Z" /><path d="M13 148H19L16 152Z" /><path d="M13 186H19L16 190Z" />
    </g>
  </Ico>
);
const UcsArt = () => (
  <svg width="74" height="76" viewBox="0 0 74 76">
    <path d="M1 65V15M5 65H52" stroke="#d8d8d8" strokeWidth="1" fill="none" />
    <rect x="0.5" y="62.5" width="9" height="9" fill="none" stroke="#d8d8d8" />
    <path d="M4 3L9 8L14 3M9 8V13" stroke="#d8d8d8" strokeWidth="1" fill="none" />
    <path d="M54 53L66 63M66 53L54 63" stroke="#d8d8d8" strokeWidth="1" fill="none" />
  </svg>
);
const Wrench = () => (
  <Ico w={30} h={30}>
    <path d="M3 8L7 3L10 8L14 8L12 2Q17 1 18 6L17 10L28 24L25 28L13 15Q5 16 3 8Z" fill="url(#metal)" stroke="#222" strokeWidth=".6" />
  </Ico>
);
const PromptIcon = () => (
  <Ico w={30} h={30}>
    <rect x="1" y="1" width="28" height="28" rx="3" fill="#d8dade" stroke="#b8bcc4" />
    <path d="M7 8L14 14L7 20" fill="none" stroke="#444" strokeWidth="2" />
    <path d="M15 22H22" stroke="#444" strokeWidth="2" />
  </Ico>
);
const XMark = () => (
  <Ico w={18} h={18}>
    <path d="M2 2L16 16M16 2L2 16" stroke="#fff" strokeWidth="3" />
  </Ico>
);
const AddTabIcon = () => (
  <Ico w={16} h={16}>
    <path d="M8 1V15M1 8H15" stroke="#ccc" strokeWidth="5" />
  </Ico>
);

// status bar drawings
const GridIcon = () => (
  <Ico w={30} h={30}>
    <path d="M7 2V28M11 2V28M15 2V28M19 2V28M23 2V28M2 7H28M2 12H28M2 17H28M2 22H28" stroke="#aaa" strokeWidth="1.6" strokeDasharray="3 1" />
  </Ico>
);
const SnapIcon = () => (
  <Ico w={30} h={30}>
    {[0, 1, 2, 3, 4].map(r => [0, 1, 2, 3, 4, 5].map(c => (
      <rect key={`${r}-${c}`} x={2 + c * 5} y={3 + r * 6} width="2.5" height="2.5" fill="#a8a8a8" />
    )))}
  </Ico>
);
const OrthoIcon = () => (
  <Glow width="32" height="34" viewBox="0 0 32 34">
    <path d="M4 2V30H30M4 22H14V30" fill="none" stroke="#3a9bff" strokeWidth="2.5" />
  </Glow>
);
const PolarIcon = () => (
  <Ico w={34} h={34}>
    <circle cx="16" cy="18" r="13" fill="none" stroke="#a8a8a8" strokeWidth="2.5" />
    <path d="M16 18L30 4M16 18H33" stroke="#a8a8a8" strokeWidth="2" />
  </Ico>
);
const TrackIcon = () => (
  <Ico w={36} h={40}>
    <path d="M2 2L34 36" stroke="#8f8f8f" strokeWidth="3" />
    <path d="M18 0V40" stroke="#7a7a7a" strokeWidth="2.5" />
  </Ico>
);
const IsoIcon = () => (
  <Glow width="34" height="32" viewBox="0 0 34 32">
    <path d="M32 2L3 27H33" fill="none" stroke="#3a9bff" strokeWidth="2.5" />
    <rect x="13" y="13" width="6" height="6" fill="#3a9bff" />
  </Glow>
);
const SnapBox = () => (
  <Glow width="34" height="38" viewBox="0 0 34 38">
    <rect x="5" y="7" width="26" height="28" fill="none" stroke="#3a9bff" strokeWidth="2.5" />
    <rect x="1" y="1" width="10" height="10" fill="#062" stroke="#111" />
    <rect x="4" y="4" width="4" height="4" fill="#2f2" />
  </Glow>
);
const AnnoIcon = ({ c = '#b5b5b5', ring, bolt }) => (
  <Ico w={36} h={38}>
    <path d="M16 3L18 20L34 33L18 28L16 36L14 28L1 35L14 20Z" fill={c} />
    {ring && <circle cx="25" cy="9" r="6" fill="#575757" stroke={c} strokeWidth="2.5" />}
    {bolt && <path d="M25 2L20 11H25L22 20L31 8H26Z" fill={c} stroke="#575757" />}
  </Ico>
);
const GearIcon = () => (
  <Ico w={26} h={26}>
    <circle cx="13" cy="13" r="8" fill="none" stroke="#a8a8a8" strokeWidth="6" />
    <path d="M13 1V25M1 13H25M4.5 4.5L21.5 21.5M21.5 4.5L4.5 21.5" stroke="#a8a8a8" strokeWidth="4" strokeDasharray="4 16" />
  </Ico>
);
const PlusIcon = () => (
  <Ico w={28} h={28}>
    <path d="M14 0V28M0 14H28" stroke="#b0b0b0" strokeWidth="3" />
  </Ico>
);
const ClockFace = () => (
  <Glow width="34" height="34" viewBox="0 0 34 34">
    <circle cx="17" cy="17" r="15" fill="#05529e" stroke="#1a7fe0" strokeWidth="2.5" />
    <path d="M17 22L23 18" stroke="#bcd" strokeWidth="2.5" />
  </Glow>
);
const ShapesIcon = () => (
  <Ico w={32} h={34}>
    <rect x="1" y="1" width="14" height="14" fill="none" stroke="#aaa" strokeWidth="2" />
    <circle cx="24" cy="14" r="6.5" fill="none" stroke="#aaa" strokeWidth="2" />
    <path d="M11 33L17 21L23 33Z" fill="none" stroke="#aaa" strokeWidth="2" />
  </Ico>
);
const FullscreenIcon = () => (
  <Ico w={32} h={28}>
    <rect x="1" y="1" width="30" height="26" fill="none" stroke="#bbb" strokeWidth="2" />
    <path d="M7 21L13 15M7 16V21H12M25 7L19 13M20 7H25V12" fill="none" stroke="#bbb" strokeWidth="2" />
  </Ico>
);
const HamburgerIcon = () => (
  <Ico w={30} h={26}>
    <path d="M0 3H30M0 13H30M0 23H30" stroke="#bbb" strokeWidth="3" />
  </Ico>
);

// taskbar drawings
const WindowsLogo = () => (
  <Ico w={32} h={32}>
    <path d="M0 4.5L13 2.7V15H0ZM15 2.4L32 0V15H15ZM0 17H13V29.3L0 27.5ZM15 17H32V32L15 29.6Z" fill="#fff" />
  </Ico>
);
const SearchGlass = () => (
  <Ico w={34} h={34}>
    <circle cx="21" cy="12" r="10" fill="none" stroke="#e6e6e6" strokeWidth="2" />
    <path d="M14 20L2 32" stroke="#e6e6e6" strokeWidth="2" />
  </Ico>
);
const StickyNotes = () => (
  <Ico w={42} h={42}>
    <rect width="42" height="42" rx="1" fill="#fbd800" />
    <path d="M21 42V23H42Z" fill="#3b3b3b" />
    <path d="M42 23V42H21Z" fill="#f0b400" />
  </Ico>
);
const FolderIcon = () => (
  <Ico w={44} h={42}>
    <path d="M1 4Q1 1 4 1H16L20 5H1Z" fill="#dca010" />
    <rect x="1" y="5" width="42" height="35" rx="2" fill="#ffd561" />
    <path d="M8 42V30Q8 27 11 27H33Q36 27 36 30V42H30V32H14V42Z" fill="#3d97de" />
    <rect x="16" y="34" width="12" height="6" fill="#f7c33c" />
  </Ico>
);
const ChromeIcon = () => (
  <Ico w={48} h={48}>
    <path d="M5 13A22 22 0 0 1 43 13H24A11 11 0 0 0 14.5 18.5Z" fill="#db4437" />
    <path d="M5 13L14.5 29.5A11 11 0 0 0 33.5 29.5L24 46A22 22 0 0 1 5 13Z" fill="#0f9d58" />
    <path d="M43 13H24A11 11 0 0 1 33.5 29.5L24 46A22 22 0 0 0 43 13Z" fill="#fbc02d" />
    <circle cx="24" cy="24" r="11" fill="#fff" />
    <circle cx="24" cy="24" r="8.8" fill="#4285f4" />
  </Ico>
);
const OutlookIcon = () => (
  <Ico w={48} h={44}>
    <rect x="14" y="0" width="30" height="22" fill="#1273c9" />
    <rect x="29" y="0" width="15" height="11" fill="#33a0e8" />
    <rect x="29" y="11" width="15" height="11" fill="#1490df" />
    <path d="M12 22H48V44H12Z" fill="#1f9ee8" />
    <path d="M12 24L30 36L48 24V22H12Z" fill="#0f78c4" />
    <rect x="0" y="10" width="24" height="24" rx="2" fill="#0a5fb4" />
    <ellipse cx="12" cy="22" rx="5" ry="6.5" fill="none" stroke="#fff" strokeWidth="3" />
  </Ico>
);
const OperaIcon = () => (
  <Ico w={44} h={46}>
    <ellipse cx="22" cy="23" rx="21" ry="22.5" fill="#e0121c" />
    <ellipse cx="22" cy="23" rx="9" ry="17" fill="#1b1b1b" />
  </Ico>
);
const AcadTile = () => (
  <Ico w={48} h={48}>
    <rect width="48" height="48" fill="#f1e2e2" />
    <rect y="33" width="48" height="15" fill="#d69a9e" />
    <path d="M24 4L38 33H30L29 26H19L18 33H10Z" fill="#b11419" />
    <path d="M24 4L20 24H19L24 4Z" fill="#e26266" />
  </Ico>
);
const ZaloIcon = () => (
  <svg width="48" height="48" viewBox="0 0 48 48">
    <rect x="0" y="0" width="48" height="48" rx="14" fill="#0a68ff" />
    <rect x="3" y="2" width="44" height="41" rx="13" fill="#fff" />
    <text x="25" y="29" textAnchor="middle" fontFamily="Open Sans" fontWeight="700" fontSize="17" fill="#0a68ff">Zalo</text>
  </svg>
);
const GmailIcon = () => (
  <Ico w={46} h={36}>
    <path d="M0 6Q0 0 6 1L10 4V36H3Q0 36 0 33Z" fill="#4285f4" />
    <path d="M46 6Q46 0 40 1L36 4V36H43Q46 36 46 33Z" fill="#34a853" />
    <path d="M0 6L10 4L23 18L36 4L46 6L23 26Z" fill="#ea4335" />
    <path d="M0 6Q0 0 6 1L10 4V14Z" fill="#c5221f" />
    <path d="M46 6Q46 0 40 1L36 4V14Z" fill="#fbbc04" />
  </Ico>
);
const CloudIcon = () => (
  <Ico w={44} h={46}>
    <path d="M8 28A8 8 0 0 1 10 12A10 10 0 0 1 28 9A9 9 0 0 1 40 18A6 6 0 0 1 36 28Z" fill="#bfe1f7" />
    <path d="M22 28A7 7 0 0 1 26 14A8 8 0 0 1 40 18A6 6 0 0 1 36 28Z" fill="#eef6fb" />
    <path d="M12 34Q9 40 12 42Q15 40 12 34ZM22 24Q19 30 22 32Q25 30 22 24ZM32 26Q29 32 32 34Q35 32 32 26Z" fill="#5fb0ea" />
  </Ico>
);
const CaretUp = () => (
  <Ico w={26} h={16}>
    <path d="M1 15L13 2L25 15" fill="none" stroke="#fff" strokeWidth="1.6" />
  </Ico>
);
const Battery = () => (
  <Ico w={30} h={18}>
    <rect x="1" y="1" width="25" height="16" fill="none" stroke="#fff" strokeWidth="2" />
    <rect x="4" y="4" width="19" height="10" fill="#fff" />
    <rect x="27" y="6" width="3" height="6" fill="#fff" />
  </Ico>
);
const Wifi = () => (
  <Ico w={26} h={26}>
    <g fill="none" stroke="#ddd" strokeWidth="1.4">
      <path d="M1 25A24 24 0 0 1 24 2" /><path d="M6 25A19 19 0 0 1 24 7" /><path d="M11 25A14 14 0 0 1 24 12" />
    </g>
    <circle cx="21" cy="21" r="3" fill="#fff" />
  </Ico>
);
const Speaker = () => (
  <Ico w={34} h={30}>
    <path d="M1 10H7L14 3V27L7 20H1Z" fill="none" stroke="#fff" strokeWidth="1.6" />
    <path d="M18 11Q21 15 18 19M22 7Q27 15 22 23M26 3Q33 15 26 27" fill="none" stroke="#fff" strokeWidth="1.6" />
  </Ico>
);
const PenIcon = () => (
  <Ico w={34} h={32}>
    <path d="M11 27L24 3L29 6L16 30L11 31Z" fill="none" stroke="#fff" strokeWidth="1.5" />
    <path d="M9 20Q1 23 2 30M26 16Q33 17 31 20" fill="none" stroke="#fff" strokeWidth="1.5" />
  </Ico>
);
const NoteIcon = () => (
  <Ico w={32} h={32}>
    <path d="M0 0H32V32H0Z" fill="#fff" />
    <path d="M5 8H27M5 15H27M5 22H20" stroke="#1b1b1b" strokeWidth="2.5" />
  </Ico>
);

//====== Data ======//
const tabs = ['Insert', 'Annotate', 'Parametric', 'View', 'Manage', 'Output', 'Add-ins', 'Autodesk 360', 'Express Tools', 'BIM 360', 'Featured Apps'];

const propGroups = [
  {
    title: 'General',
    rows: [
      { label: 'Color', value: 'BvL...', swatch: true },
      { label: 'Layer', value: 'Q\u00a0-...' },
      { label: 'Linetype', value: 'B...', line: 'dash' },
      { label: 'Linetype...', value: '1' },
      { label: 'Lineweight', value: 'B...', line: 'solid' },
      { label: 'Transpar...', value: 'BvLa...' },
      { label: 'Thickness', value: '0' },
    ],
  },
  {
    title: '3D Visualization',
    long: true,
    rows: [
      { label: 'Material', value: 'BvLa...' },
      { label: 'Shadow...', value: 'Cast...' },
    ],
  },
  {
    title: 'Plot style',
    rows: [
      { label: 'Plot style', value: 'BvC...', dim: true },
      { label: 'Plot style...', value: 'None' },
      { label: 'Plot tabl...', value: 'Model', dim: true },
      { label: 'Plot tabl...', value: 'Not...', dim: true },
    ],
  },
  {
    title: 'View',
    rows: [
      { label: 'Center X', value: '208...', dim: true },
      { label: 'Center Y', value: '126...', dim: true },
      { label: 'Center Z', value: '0', dim: true },
      { label: 'Height', value: '121...', dim: true },
      { label: 'Width', value: '312...', dim: true },
    ],
  },
  {
    title: 'Misc',
    rows: [
      { label: 'Annotati...', value: '1:1' },
      { label: 'UCS icon', value: 'Yes' },
    ],
  },
];

const valueIndent = row => (row.line ? 6 : row.swatch ? 4 : 7);

const PropertyGroup = ({ group }) => (
  <PropGroup>
    <GroupHead $open={!group.long}>
      <GroupName $long={group.long}>{group.title}</GroupName>
      {!group.long && <GroupDash />}
    </GroupHead>
    {group.rows.map(row => (
      <PropRow key={row.label + row.value}>
        <PropLabel>{row.label}</PropLabel>
        <PropValue $dim={row.dim} $left={valueIndent(row)}>
          {row.swatch && <Swatch />}
          {row.line && <LineSample $dash={row.line === 'dash'} />}
          {row.value}
        </PropValue>
      </PropRow>
    ))}
  </PropGroup>
);

const Folded = ({ w, label, icon, iconH, top }) => (
  <FoldedPanel $w={w}>
    <FoldedIcon $h={iconH} $top={top}>{icon}</FoldedIcon>
    <FoldedLabel>
      {label}
      <FoldedArrow><Arrow $s={8} /></FoldedArrow>
    </FoldedLabel>
  </FoldedPanel>
);

export default function App() {
  return (
    <Screen>
      <GlobalStyle />
      <Defs />
      <TopStrip />
      <Middle>
        <AppWindow>
          <TitleBar>
            <AppButton><AutocadLogo /><Arrow $s={3} /></AppButton>
            <Qat>
              <QatCell><Doc /></QatCell>
              <QatCell><Open /></QatCell>
              <QatCell><Save /></QatCell>
              <QatCell><SaveAs /></QatCell>
              <QatCell><Printer /></QatCell>
              <QatCell><Undo /></QatCell>
              <QatCell $w={24}><Arrow /></QatCell>
              <QatCell><Undo flip c="#7b7b7b" /></QatCell>
              <QatCell $w={22}><Arrow /></QatCell>
              <QatCell $w={40}><Customize /></QatCell>
            </Qat>
            <TitleArea>
              <span>Autodesk AutoCAD 2015</span>
              <span>Drawing1.dwg</span>
            </TitleArea>
            <SearchBar>
              <SearchArrow />
              <SearchInput>Type a keyword or phrase</SearchInput>
              <BarCell $w={48}><Binoculars /></BarCell>
              <BarCell $w={40}><UserIcon /></BarCell>
              <BarCell $w={176} $start>&nbsp;Sign In</BarCell>
              <BarCell $w={21}><Arrow /></BarCell>
              <BarCell $w={54}><ExchangeIcon /></BarCell>
              <BarCell $w={42}><A360Icon /></BarCell>
              <BarCell $w={20}><Arrow /></BarCell>
              <BarCell $w={20} />
              <BarSep />
              <BarCell $w={62}><HelpIcon /></BarCell>
              <BarCell $w={12}><Arrow /></BarCell>
            </SearchBar>
            <WinControls>
              <WinButton><WinMin /></WinButton>
              <WinButton><WinMax /></WinButton>
              <WinButton><WinClose /></WinButton>
            </WinControls>
          </TitleBar>

          <TabRow>
            <RibbonTab $active $pad={16}>Home</RibbonTab>
            {tabs.map(t => <RibbonTab key={t}>{t}</RibbonTab>)}
            <TabExtras><WorkspaceToggle /><Arrow /></TabExtras>
          </TabRow>

          <Ribbon>
            <Panel $w={442}>
              <PanelBody>
                <BigTool $w={86}><BigIcon><LineIcon /></BigIcon><ToolLabel>Line</ToolLabel></BigTool>
                <BigTool $w={84}><BigIcon><PolylineIcon /></BigIcon><ToolLabel>Polyline</ToolLabel></BigTool>
                <BigTool $w={114}><BigIcon><CircleIcon /></BigIcon><ToolLabel>Circle</ToolLabel><ToolArrow><Arrow /></ToolArrow></BigTool>
                <BigTool $w={68}><BigIcon><ArcIcon /></BigIcon><ToolLabel>Arc</ToolLabel><ToolArrow><Arrow /></ToolArrow></BigTool>
                <ToolColumn $left={13}>
                  <ToolRow><SmallTool $w={60} $gap={16}><RectIcon /><Arrow /></SmallTool></ToolRow>
                  <ToolRow><SmallTool $w={60} $gap={16}><EllipseIcon /><Arrow /></SmallTool></ToolRow>
                  <ToolRow><SmallTool $w={60} $gap={16}><HatchIcon /><Arrow /></SmallTool></ToolRow>
                </ToolColumn>
              </PanelBody>
              <PanelTitle>Draw <Arrow $s={8} /></PanelTitle>
            </Panel>

            <Panel $w={262}>
              <PanelBody>
                <ToolColumn>
                  <ToolRow $left={12}>
                    <SmallTool $w={57}><MoveIcon /></SmallTool>
                    <SmallTool $w={59}><RotateIcon /></SmallTool>
                    <SmallTool $w={82}><TrimIcon /><Arrow /></SmallTool>
                    <SmallTool><EraseIcon /></SmallTool>
                  </ToolRow>
                  <ToolRow $left={12}>
                    <SmallTool $w={57}><CopyIcon /></SmallTool>
                    <SmallTool $w={59}><MirrorIcon /></SmallTool>
                    <SmallTool $w={82}><FilletIcon /><Arrow /></SmallTool>
                    <SmallTool><ExplodeIcon /></SmallTool>
                  </ToolRow>
                  <ToolRow $left={12}>
                    <SmallTool $w={57}><StretchIcon /></SmallTool>
                    <SmallTool $w={59}><ScaleIcon /></SmallTool>
                    <SmallTool $w={82}><ArrayIcon /><Arrow /></SmallTool>
                    <SmallTool><OffsetIcon /></SmallTool>
                  </ToolRow>
                </ToolColumn>
              </PanelBody>
              <PanelTitle>Modify <Arrow $s={8} /></PanelTitle>
            </Panel>

            <Panel $w={166}>
              <PanelBody>
                <BigTool $w={94}>
                  <BigIcon><LetterIcon>A</LetterIcon></BigIcon>
                  <ToolLabel>Text</ToolLabel>
                  <ToolArrow><Arrow /></ToolArrow>
                </BigTool>
                <ToolColumn>
                  <ToolRow><SmallTool $w={60} $gap={14}><DimIcon /><Arrow /></SmallTool></ToolRow>
                  <ToolRow><SmallTool $w={60} $gap={14}><LeaderIcon /><Arrow /></SmallTool></ToolRow>
                  <ToolRow><SmallTool $w={60}><TableIcon /></SmallTool></ToolRow>
                </ToolColumn>
              </PanelBody>
              <PanelTitle>Annotation <Arrow $s={8} /></PanelTitle>
            </Panel>

            <Panel $w={544}>
              <PanelBody>
                <BigTool $w={126}>
                  <BigIcon><LayerPropsIcon /></BigIcon>
                  <ToolLabel>Layer<br />Properties</ToolLabel>
                </BigTool>
                <div>
                  <LayerCombo>
                    <ComboCell $w={44}><Bulb /></ComboCell>
                    <ComboCell $w={34}><Sun /></ComboCell>
                    <ComboCell $w={42}><LockOpen /></ComboCell>
                    <ComboCell $w={4} />
                    <ColorChip />
                    Q - nét trục
                    <ComboArrow><Arrow $s={7} /></ComboArrow>
                  </LayerCombo>
                  <ToolColumn $top={2}>
                    <ToolRow $left={7}>
                      <SmallTool $w={48}><LayerSmall kind="bulb" /></SmallTool>
                      <SmallTool $w={49}><LayerSmall kind="stack" /></SmallTool>
                      <SmallTool $w={49}><LayerSmall kind="snow" /></SmallTool>
                      <SmallTool $w={48}><LayerSmall kind="lock" /></SmallTool>
                      <SmallTool><LayerSmall kind="stackUser" /></SmallTool>
                    </ToolRow>
                    <ToolRow $left={7}>
                      <SmallTool $w={48}><LayerExtra kind="bulb" /></SmallTool>
                      <SmallTool $w={49}><LayerExtra kind="arrow" /></SmallTool>
                      <SmallTool $w={49}><LayerExtra kind="sun" /></SmallTool>
                      <SmallTool $w={48}><LayerSmall kind="lockBlue" /></SmallTool>
                      <SmallTool><LayerExtra kind="brush" /></SmallTool>
                    </ToolRow>
                  </ToolColumn>
                </div>
              </PanelBody>
              <PanelTitle>Layers <Arrow $s={8} /></PanelTitle>
            </Panel>

            <Panel $w={156}>
              <PanelBody>
                <BigTool $w={82}>
                  <BigIcon><InsertIcon /></BigIcon>
                  <ToolLabel>Insert</ToolLabel>
                </BigTool>
                <ToolColumn $top={13} $left={6}>
                  <ToolRow><SmallTool $w={60}><BlockSmall /></SmallTool></ToolRow>
                  <ToolRow><SmallTool $w={60}><BlockSmall kind="bolt" /></SmallTool></ToolRow>
                  <ToolRow><SmallTool $w={60} $gap={8}><BlockSmall kind="edit" /><Arrow $s={4} /></SmallTool></ToolRow>
                </ToolColumn>
              </PanelBody>
              <PanelTitle>Block <Arrow $s={8} /></PanelTitle>
            </Panel>

            <Folded w={119} label="Properties" icon={<ColorWheel />} />
            <Folded w={117} label="Groups" icon={<GroupsIcon />} iconH={46} />
            <Folded w={119} label="Utilities" icon={<CalcIcon />} />
            <Folded w={118} label="Clipboard" icon={<ClipboardIcon />} />
            <Folded w={116} label="View" icon={<ViewIcon />} top={20} />

            <TouchPanel>
              <BigTool $w={84} $fill>
                <BigIcon><CrossIcon /></BigIcon>
                <ToolLabel>Select<br />Mode</ToolLabel>
              </BigTool>
              <TouchTitle>Touch</TouchTitle>
            </TouchPanel>
            <RibbonRest />
          </Ribbon>
          <RibbonFoot />

          <Workspace>
            <Palette>
              <PaletteHead>PROPERTIES</PaletteHead>
              <PaletteInner>
                <PaletteTools>
                  <SelectBox>
                    <SelectText>No se</SelectText>
                    <SelectButton><Arrow $s={3} /></SelectButton>
                  </SelectBox>
                  <PaletteTool><PlusBox /></PaletteTool>
                  <PaletteTool><PickPoint /></PaletteTool>
                  <PaletteTool><PickPoint extra /></PaletteTool>
                </PaletteTools>
                <PaletteBody>
                  <ScrollThumb />
                  <PropList>
                    {propGroups.map(g => <PropertyGroup key={g.title} group={g} />)}
                  </PropList>
                </PaletteBody>
              </PaletteInner>
            </Palette>

            <Canvas>
              <RedLine $x={411} />
              <RedLine $x={655} />
              <ViewLabel>[−][Top][2D Wireframe]</ViewLabel>
              <ViewControls><ViewportControls /></ViewControls>
              <NavBar><NavBarArt /></NavBar>
              <UcsIcon><UcsArt /></UcsIcon>
              <CommandLine>
                <CommandHandle>
                  <GripDots />
                  <XMark />
                  <Wrench />
                </CommandHandle>
                <CommandInput>
                  <PromptIcon />
                  <Arrow $s={6} $c="#8a8a8a" />
                  <Caret />
                  <CommandEnd><ArrowUp /></CommandEnd>
                </CommandInput>
              </CommandLine>
            </Canvas>
          </Workspace>

          <StatusBar>
            <LayoutTabs>
              <LayoutTab $w={130} $active>Model</LayoutTab>
              <LayoutTab $w={124}>Layout1</LayoutTab>
              <LayoutTab $w={127}>Layout2</LayoutTab>
              <AddTab><AddTabIcon /></AddTab>
            </LayoutTabs>
            <StatusGroups>
              <StatusGroup $w={99}><StatusCell $w={93}>MODEL</StatusCell></StatusGroup>
              <StatusGroup $w={129}>
                <StatusCell $w={45}><GridIcon /></StatusCell>
                <StatusCell $w={48}><SnapIcon /></StatusCell>
                <StatusCell $w={30}><Arrow $s={7} /></StatusCell>
              </StatusGroup>
              <StatusGroup $w={334}>
                <StatusCell $w={44}><OrthoIcon /></StatusCell>
                <StatusCell $w={52}><PolarIcon /></StatusCell>
                <StatusCell $w={26}><Arrow $s={7} /></StatusCell>
                <StatusCell $w={54}><TrackIcon /></StatusCell>
                <StatusCell $w={28}><Arrow $s={7} /></StatusCell>
                <StatusCell $w={46} $rule><IsoIcon /></StatusCell>
                <StatusCell $w={54}><SnapBox /></StatusCell>
                <StatusCell $w={24}><Arrow $s={7} /></StatusCell>
              </StatusGroup>
              <StatusGroup $w={214}>
                <StatusCell $w={46}><AnnoIcon c="#2a8cff" ring /></StatusCell>
                <StatusCell $w={52}><AnnoIcon bolt /></StatusCell>
                <StatusCell $w={40}><AnnoIcon /></StatusCell>
                <StatusCell $w={44}>1:1</StatusCell>
                <StatusCell $w={26}><Arrow $s={7} /></StatusCell>
              </StatusGroup>
              <StatusGroup $w={131}>
                <StatusCell $w={44}><GearIcon /></StatusCell>
                <StatusCell $w={33}><Arrow $s={7} /></StatusCell>
                <StatusCell $w={48} $rule><PlusIcon /></StatusCell>
              </StatusGroup>
              <StatusGroup $w={51}><StatusCell $w={45}><ClockFace /></StatusCell></StatusGroup>
              <StatusGroup $w={63}><StatusCell $w={57}><ShapesIcon /></StatusCell></StatusGroup>
              <StatusGroup $w={91}>
                <StatusCell $w={44}><FullscreenIcon /></StatusCell>
                <StatusCell $w={41}><HamburgerIcon /></StatusCell>
              </StatusGroup>
            </StatusGroups>
          </StatusBar>
        </AppWindow>
        <RightEdge>
          <EdgePart $h={196} $c="#1f2d3b" />
          <EdgePart $h={320} $c="#f6f6f6" />
          <EdgePart $h={240} $c="#d9d9d9" />
          <EdgePart $h={592} $c="#f4f4f4" />
        </RightEdge>
      </Middle>
      <DesktopStrip>
        <StripText>&gt; &nbsp;&nbsp; SOURCES (D:)</StripText>
        <StripBlock />
        <StripLine />
      </DesktopStrip>
      <Taskbar>
        <StartButton><WindowsLogo /></StartButton>
        <SearchBox><SearchGlass />Type here to search</SearchBox>
        <AppIcons>
          <AppSlot><StickyNotes /></AppSlot>
          <AppSlot><FolderIcon /></AppSlot>
          <AppSlot $running><ChromeIcon /></AppSlot>
          <AppSlot><OutlookIcon /></AppSlot>
          <AppSlot $running><OperaIcon /></AppSlot>
          <AppSlot $running $active><AcadTile /></AppSlot>
          <AppSlot $running><ZaloIcon /></AppSlot>
          <AppSlot $running><GmailIcon /></AppSlot>
        </AppIcons>
        <Tray>
          <TrayItem $w={56}><CloudIcon /></TrayItem>
          <TrayItem $w={84} $size={26}>29°C</TrayItem>
          <TrayItem $w={86}><CaretUp /></TrayItem>
          <TrayItem $w={44}><Battery /></TrayItem>
          <TrayItem $w={88}><Wifi /></TrayItem>
          <TrayItem $w={32}><Speaker /></TrayItem>
          <TrayItem $w={110}><PenIcon /></TrayItem>
          <TrayItem $w={45} $size={22}>ENG</TrayItem>
          <Clock>4:46 PM<br />8/23/2021</Clock>
          <NoteWrap><NoteIcon /><NoteBadge>3</NoteBadge></NoteWrap>
        </Tray>
      </Taskbar>
    </Screen>
  );
}
